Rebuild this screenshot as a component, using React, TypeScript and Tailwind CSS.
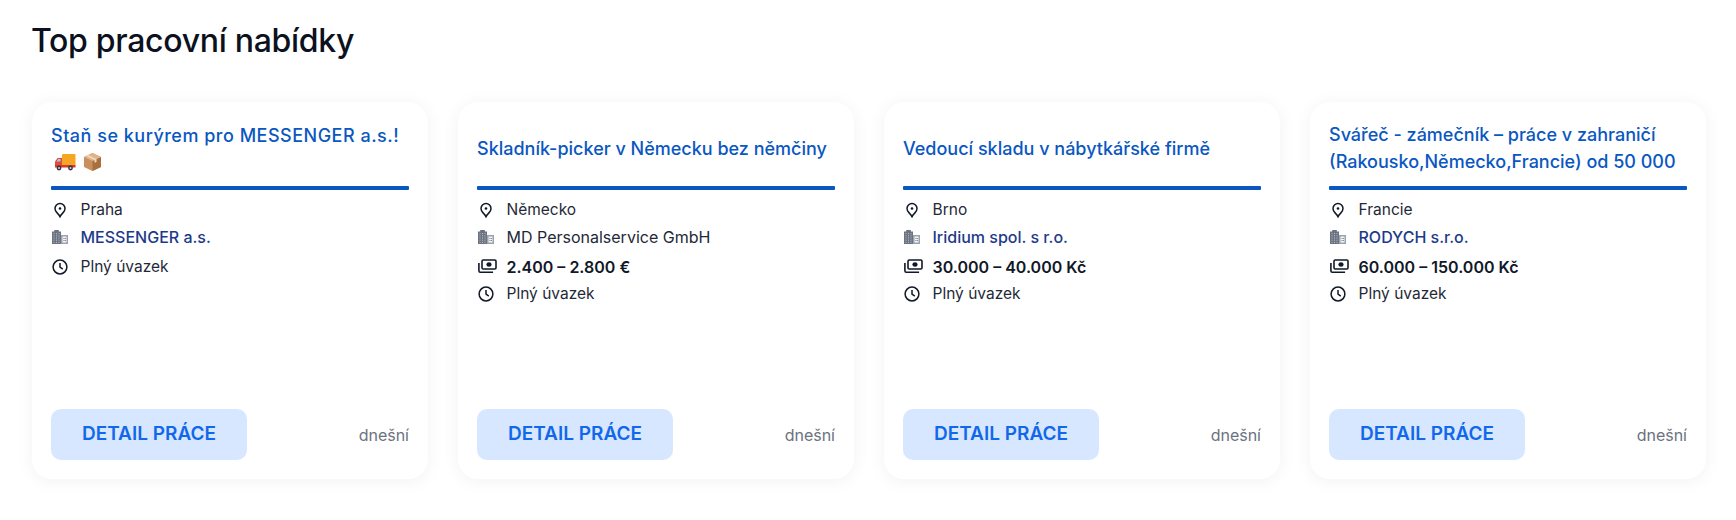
import React from 'react'

type Job = {
  title: React.ReactNode
  city: string
  company: string
  companyLink: boolean
  salary?: string
}

const jobs: Job[] = [
  {
    title: (
      <>
        <span className="tracking-[0.5px]">Staň se kurýrem pro MESSENGER a.s.!</span>
        <span className="flex h-[26px] items-center gap-[7px] pl-[3px]">
          <TruckEmoji />
          <BoxEmoji />
        </span>
      </>
    ),
    city: 'Praha',
    company: 'MESSENGER a.s.',
    companyLink: true,
  },
  { title: 'Skladník-picker v Německu bez němčiny', city: 'Německo', company: 'MD Personalservice GmbH', companyLink: false, salary: '2.400 – 2.800 €' },
  { title: 'Vedoucí skladu v nábytkářské firmě', city: 'Brno', company: 'Iridium spol. s r.o.', companyLink: true, salary: '30.000 – 40.000 Kč' },
  { title: 'Svářeč - zámečník – práce v zahraničí (Rakousko,Německo,Francie) od 50 000', city: 'Francie', company: 'RODYCH s.r.o.', companyLink: true, salary: '60.000 – 150.000 Kč' },
]

function TruckEmoji() {
  return (
    <svg width="22" height="18" viewBox="0 0 22 18">
      <rect x="8" y="1" width="13.5" height="12" rx="1" fill="#f5a623" />
      <path d="M1 13V8.500L3.500 5H8v8z" fill="#e5493a" />
      <path d="M2.500 8.500L4 6h2.500v2.500z" fill="#9ad0f0" />
      <rect x="1" y="12" width="20.5" height="2.500" fill="#d8392c" />
      <circle cx="5" cy="15" r="2.400" fill="#33333d" />
      <circle cx="5" cy="15" r="1" fill="#d9d9d9" />
      <circle cx="16.500" cy="15" r="2.400" fill="#33333d" />
      <circle cx="16.500" cy="15" r="1" fill="#d9d9d9" />
    </svg>
  )
}

function BoxEmoji() {
  return (
    <svg width="19" height="20" viewBox="0 0 19 20">
      <path d="M9.500 1L18 5v10l-8.500 4L1 15V5z" fill="#c98f5c" />
      <path d="M9.500 9L18 5v10l-8.500 4z" fill="#a8703f" />
      <path d="M9.500 1L18 5l-8.500 4L1 5z" fill="#deb48a" />
      <path d="M5 3l8.500 4v3l-2 .8V8L3 4z" fill="#efd9c0" />
    </svg>
  )
}

function PinIcon() {
  return (
    <svg width="16" height="16" viewBox="0 0 16 16" fill="none" stroke="#111827" strokeWidth="1.500">
      <path d="M8 15c-.5-1.400-1.600-2.800-2.900-4.100C3.900 9.700 3 8.400 3 6.500a5 5 0 0 1 10 0c0 1.900-.9 3.200-2.100 4.400C9.600 12.200 8.500 13.600 8 15z" strokeLinejoin="round" />
      <circle cx="8" cy="6.500" r="1.300" fill="#111827" stroke="none" />
    </svg>
  )
}

function BuildingIcon() {
  return (
    <svg width="16" height="16" viewBox="0 0 16 16">
      <path d="M0 2.500h2.200V1h4.600v1.500H9V15H0z" fill="#6b7280" />
      <path d="M9 6h7v9H9z" fill="#9ca3af" />
      <path d="M10.500 7.500h4v6h-4z" fill="#f3f4f6" />
      <path d="M11.500 9h1v1h-1zM11.500 11h1v1h-1zM13 9h.8v1H13zM13 11h.8v1H13z" fill="#6b7280" />
      <path d="M2 4v10M4.500 4v10M7 4v10" stroke="#d1d5db" strokeWidth="0.700" strokeDasharray="1.200 1" />
    </svg>
  )
}

function MoneyIcon() {
  return (
    <svg width="19" height="15" viewBox="0 0 19 15" fill="none" stroke="#111827" strokeWidth="1.600">
      <rect x="4" y="1" width="14" height="9" rx="1.200" />
      <ellipse cx="11" cy="5.500" rx="2.600" ry="2.200" fill="#111827" stroke="none" />
      <path d="M.9 4v7.800c0 .8.500 1.400 1.400 1.400h12.800" />
    </svg>
  )
}

function ClockIcon() {
  return (
    <svg width="16" height="16" viewBox="0 0 16 16" fill="none" stroke="#111827" strokeWidth="1.500">
      <circle cx="8" cy="8" r="6.900" />
      <path d="M8 4v4.200l2.800 1.900" />
    </svg>
  )
}

function InfoRow({ icon, children, className }: { icon: React.ReactNode; children: React.ReactNode; className: string }) {
  return (
    <div className={`flex h-[27px] items-center ${className}`}>
      <span className="flex w-[29.5px] shrink-0 items-center pl-[1px]">{icon}</span>
      {children}
    </div>
  )
}

function JobCard({ job }: { job: Job }) {
  return (
    <article className="flex h-[377px] w-[396px] shrink-0 flex-col rounded-[20px] bg-white px-[19px] pb-[19px] pt-[10px] shadow-[0_2px_18px_rgba(0,0,0,0.055)]">
      <h3 className="flex h-[72px] flex-col justify-center text-[18px] font-medium leading-[27px] text-[#0a57c2]">
        {job.title}
      </h3>
      <div className="mt-[2px] h-[4px] rounded-[1px] bg-[#0a57c2]" />
      <div className="mt-[6px] flex flex-col">
        <InfoRow icon={<PinIcon />} className="text-[15.5px] text-[#1f2937]">{job.city}</InfoRow>
        <InfoRow
          icon={<BuildingIcon />}
          className={`mb-[3px] text-[16px] ${job.companyLink ? 'font-medium text-[#1e3a8a]' : 'text-[#1f2937]'}`}
        >
          {job.company}
        </InfoRow>
        {job.salary && (
          <InfoRow icon={<MoneyIcon />} className="text-[16px] font-semibold text-[#111827]">{job.salary}</InfoRow>
        )}
        <InfoRow icon={<ClockIcon />} className="text-[15.5px] text-[#1f2937]">Plný úvazek</InfoRow>
      </div>
      <div className="mt-auto flex items-center justify-between">
        <a className="flex h-[51px] w-[196px] items-center justify-center rounded-[10px] bg-[#d6e7ff] text-[19px] font-semibold text-[#1268ea]">
          DETAIL PRÁCE
        </a>
        <span className="text-[16px] text-[#6b7280]">dnešní</span>
      </div>
    </article>
  )
}

export default function App() {
  return (
    <main className="h-[520px] w-[1736px] bg-white px-[32px] pt-[19px] font-['Inter',sans-serif]">
      <h2 className="-ml-[1px] text-[32px] font-medium leading-[44px] tracking-[-0.3px] text-[#0b1120]">Top pracovní nabídky</h2>
      <section className="mt-[39px] flex gap-[30px]">
        {jobs.map((job) => (
          <JobCard key={job.city} job={job} />
        ))}
      </section>
    </main>
  )
}
